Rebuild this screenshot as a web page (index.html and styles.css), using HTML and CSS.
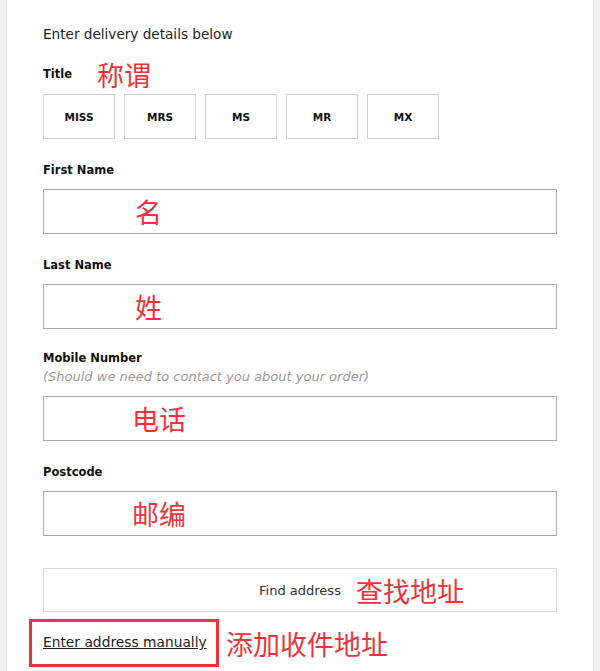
FILE: index.html
```html
<!DOCTYPE html>
<html>
<head>
    <meta charset="UTF-8">
    <title>Delivery Details</title>
    <link rel="stylesheet" href="styles.css">
</head>
<body>
    <div class="panel">
        <p class="intro">Enter delivery details below</p>

        <div class="field field-title">
            <div class="label">Title <span class="note note-title">称谓</span></div>
            <div class="titles">
                <button class="title-btn">MISS</button>
                <button class="title-btn">MRS</button>
                <button class="title-btn">MS</button>
                <button class="title-btn">MR</button>
                <button class="title-btn">MX</button>
            </div>
        </div>

        <div class="field">
            <div class="label">First Name</div>
            <div class="input"><span class="note-in">名</span></div>
        </div>

        <div class="field">
            <div class="label">Last Name</div>
            <div class="input"><span class="note-in">姓</span></div>
        </div>

        <div class="field field-mobile">
            <div class="label">Mobile Number</div>
            <div class="hint">(Should we need to contact you about your order)</div>
            <div class="input"><span class="note-in note-wide">电话</span></div>
        </div>

        <div class="field">
            <div class="label">Postcode</div>
            <div class="input"><span class="note-in note-wide">邮编</span></div>
        </div>

        <button class="find">
            <span class="find-text">Find address<span class="note note-find">查找地址</span></span>
        </button>

        <div class="manual">
            <a href="#" class="manual-link">Enter address manually</a>
            <span class="mark"></span>
            <span class="note note-manual">添加收件地址</span>
        </div>
    </div>
</body>
</html>
```

FILE: styles.css
```css
html, body {
    margin: 0;
    padding: 0;
    height: 100%;
}

body {
    background: #f1f1f1;
    font-family: 'DejaVu Sans', 'Open Sans', Arial, sans-serif;
    color: #111;
    overflow: hidden;
}

.panel {
    margin: 0 6px;
    min-height: 100%;
    box-sizing: border-box;
    background: #fff;
    border-left: 1px solid #e2e2e2;
    border-right: 1px solid #e2e2e2;
    padding: 24px 36px 0;
}

.intro {
    margin: 0;
    font-size: 13.6px;
    line-height: 20px;
    color: #222;
}

.field {
    margin-top: 21px;
}

.field-title {
    margin-top: 20px;
}

.field-mobile {
    margin-top: 19px;
}

.label {
    position: relative;
    font-size: 11.5px;
    font-weight: bold;
    line-height: 20px;
    color: #111;
    margin-bottom: 9px;
}

.field-title .label {
    margin-bottom: 10px;
}

.field-mobile .label {
    margin-bottom: 0;
}

.hint {
    font-size: 13px;
    font-style: italic;
    line-height: 18px;
    color: #9a9a9a;
    margin-bottom: 10px;
}

.titles {
    display: flex;
    gap: 9px;
}

.title-btn {
    width: 72px;
    height: 45px;
    box-sizing: border-box;
    background: #fff;
    border: 1px solid #cfcfcf;
    font-family: inherit;
    font-size: 10.5px;
    font-weight: bold;
    color: #111;
    padding: 0;
}

.input {
    height: 45px;
    box-sizing: border-box;
    border: 1px solid #a9a9a9;
    display: flex;
    align-items: center;
    padding-left: 91px;
}

/* red annotations over the form */
.note,
.note-in {
    font-family: 'Noto Sans CJK SC', sans-serif;
    font-weight: normal;
    font-size: 27px;
    line-height: 1;
    color: #e8353b;
    white-space: nowrap;
}

.note-wide {
    margin-left: -3px;
}

.note {
    position: absolute;
}

.note-title {
    left: 54px;
    top: -3px;
}

.find {
    display: flex;
    justify-content: center;
    align-items: center;
    width: 100%;
    height: 44px;
    margin-top: 32px;
    box-sizing: border-box;
    background: #fff;
    border: 1px solid #dcdcdc;
    padding: 0;
    font-family: inherit;
    font-size: 13px;
    color: #333;
}

.find-text {
    position: relative;
}

.note-find {
    left: calc(100% + 15px);
    top: -6px;
}

.manual {
    position: relative;
    margin-top: 20px;
    line-height: 20px;
}

.manual-link {
    font-size: 13.8px;
    color: #222;
    text-decoration: underline;
}

.mark {
    position: absolute;
    left: -14px;
    top: -13px;
    width: 190px;
    height: 48px;
    box-sizing: border-box;
    border: 3px solid #e8353b;
}

.note-manual {
    left: 183px;
    top: -2px;
}
```
